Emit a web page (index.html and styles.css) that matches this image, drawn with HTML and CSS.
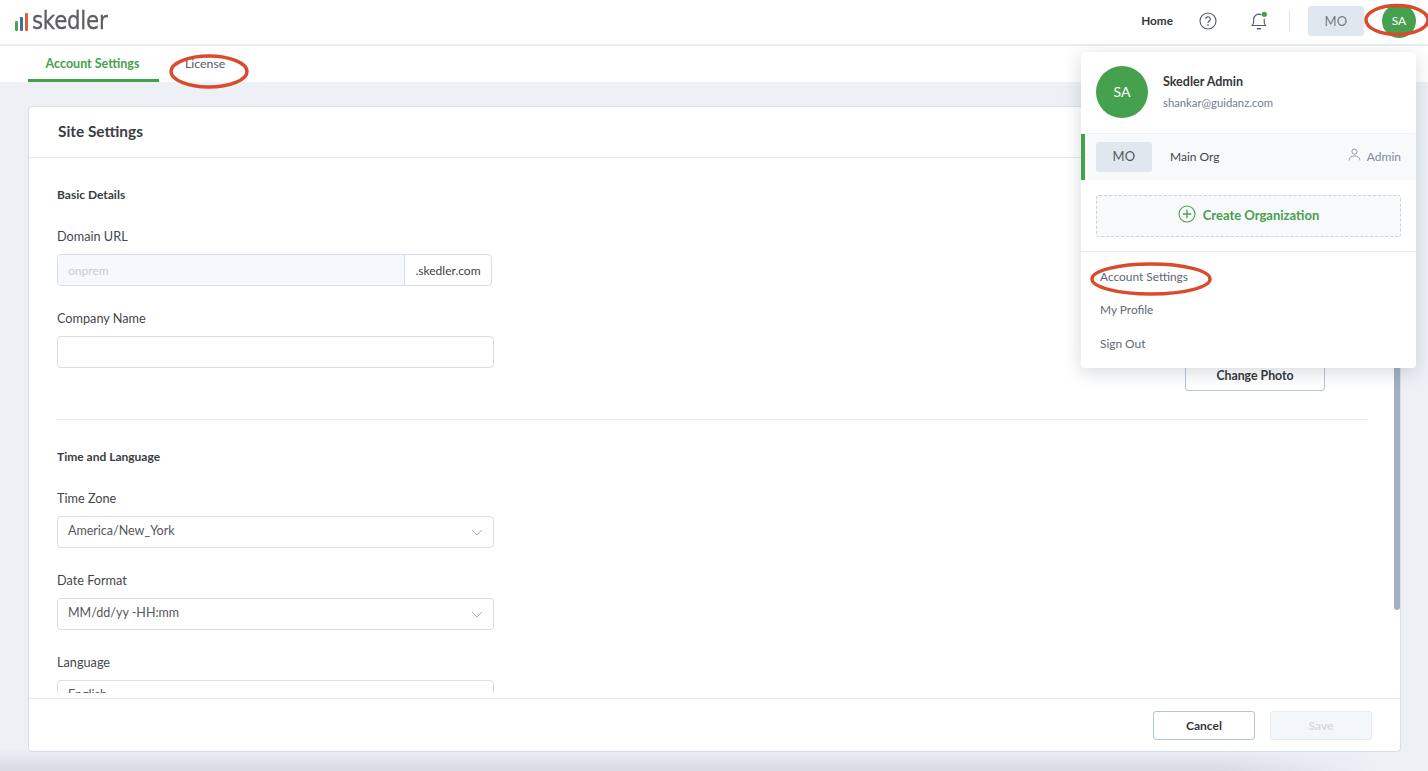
FILE: index.html
```html
<!DOCTYPE html>
<html lang="en">
<head>
<meta charset="utf-8">
<title>Skedler – Account Settings</title>
<link rel="stylesheet" href="styles.css">
</head>
<body>
<div class="app">
  <header class="topbar">
    <div class="logo">
      <svg class="logo-bars" width="14" height="20" viewBox="0 0 14 20"><rect x="0" y="9" width="3" height="10" rx="1" fill="#4aa252"/><rect x="5" y="5" width="3" height="14" rx="1" fill="#3f6f9f"/><rect x="10" y="1" width="3" height="18" rx="1" fill="#d9603b"/></svg>
      <span class="logo-text">skedler</span>
    </div>
    <nav class="topnav">
      <span class="home">Home</span>
      <svg class="help" width="18" height="18" viewBox="0 0 18 18"><circle cx="9" cy="9" r="8" fill="none" stroke="#4a5a72" stroke-width="1.1"/><path d="M6.7 7.1a2.3 2.3 0 1 1 3.4 2c-.8.5-1.1.9-1.1 1.7" fill="none" stroke="#4a5a72" stroke-width="1.2"/><circle cx="9" cy="13.1" r=".8" fill="#4a5a72"/></svg>
      <svg class="bell" width="18" height="20" viewBox="0 0 18 20"><path d="M2 14.5c1.2-.8 1.6-2 1.6-3.6V8.5a5.3 5.3 0 0 1 7.5-4.8M14.2 8v2.9c0 1.6.4 2.8 1.6 3.6H2" fill="none" stroke="#4a5a72" stroke-width="1.1" stroke-linecap="round" stroke-linejoin="round"/><rect x="6.8" y="17" width="4.4" height="1.6" rx=".8" fill="#4a5a72"/><circle cx="14.3" cy="3.3" r="2.6" fill="#45a14d"/></svg>
      <span class="vsep"></span>
      <span class="org-chip">MO</span>
      <span class="avatar-sm">SA</span>
    </nav>
  </header>

  <div class="tabs">
    <span class="tab active">Account Settings</span>
    <span class="tab">License</span>
  </div>

  <main class="page">
    <section class="card">
      <h1 class="card-title">Site Settings</h1>
      <div class="card-body">
        <div class="row-top">
          <div class="form-col">
            <h2 class="section-h">Basic Details</h2>
            <label class="label">Domain URL</label>
            <div class="domain">
              <span class="domain-input">onprem</span>
              <span class="domain-suffix">.skedler.com</span>
            </div>
            <label class="label">Company Name</label>
            <div class="input"></div>
          </div>
          <div class="photo-col">
            <button class="btn-photo">Change Photo</button>
          </div>
        </div>
        <hr class="divider">
        <div class="form-col">
          <h2 class="section-h">Time and Language</h2>
          <label class="label">Time Zone</label>
          <div class="select"><span>America/New_York</span><svg class="chev" width="12" height="7" viewBox="0 0 12 7"><path d="M1 1l5 5 5-5" fill="none" stroke="#a3adbb" stroke-width="1"/></svg></div>
          <label class="label">Date Format</label>
          <div class="select"><span>MM/dd/yy -HH:mm</span><svg class="chev" width="12" height="7" viewBox="0 0 12 7"><path d="M1 1l5 5 5-5" fill="none" stroke="#a3adbb" stroke-width="1"/></svg></div>
          <label class="label">Language</label>
          <div class="select select-lang"><span>English</span></div>
        </div>
      </div>
      <div class="scrollbar"></div>
      <footer class="card-foot">
        <button class="btn btn-cancel">Cancel</button>
        <button class="btn btn-save">Save</button>
      </footer>
    </section>
  </main>

  <div class="menu">
    <div class="menu-user">
      <span class="avatar-lg">SA</span>
      <div class="menu-id">
        <div class="menu-name">Skedler Admin</div>
        <div class="menu-mail">shankar@guidanz.com</div>
      </div>
    </div>
    <div class="menu-org">
      <span class="org-chip org-chip-menu">MO</span>
      <span class="org-name">Main Org</span>
      <span class="org-role">
        <svg width="13" height="14" viewBox="0 0 13 14"><circle cx="6.5" cy="3.6" r="2.6" fill="none" stroke="#8d99ac" stroke-width="1"/><path d="M1 12.5c0-3 2.4-4.6 5.5-4.6s5.500 1.600 5.500 4.600" fill="none" stroke="#8d99ac" stroke-width="1"/></svg>
        Admin
      </span>
    </div>
    <div class="menu-create">
      <div class="create-box">
        <svg width="18" height="18" viewBox="0 0 18 18"><circle cx="9" cy="9" r="8" fill="none" stroke="#45a14d" stroke-width="1.1"/><path d="M9 4.800v8.400M4.800 9h8.400" stroke="#45a14d" stroke-width="1.300"/></svg>
        <span>Create Organization</span>
      </div>
    </div>
    <ul class="menu-links">
      <li>Account Settings</li>
      <li>My Profile</li>
      <li>Sign Out</li>
    </ul>
  </div>

  <div class="bottom-fade"></div>

  <svg class="marks" width="1428" height="771" viewBox="0 0 1428 771">
    <g fill="none" stroke="#dc4a2e" stroke-width="3.500">
      <ellipse cx="209" cy="71.500" rx="38" ry="15.500"/>
      <ellipse cx="1397" cy="20" rx="31" ry="14.500"/>
      <ellipse cx="1151" cy="279" rx="59" ry="15"/>
    </g>
  </svg>
</div>
</body>
</html>
```
FILE: styles.css
```css
* { box-sizing: border-box; }
html, body { margin: 0; padding: 0; height: 100%; overflow: hidden; }
body { font-family: "Lato", "Liberation Sans", sans-serif; color: #3c3f45; background: #edf1f6; }

.app { position: relative; width: 1428px; height: 771px; display: flex; flex-direction: column; overflow: hidden; }

/* top bar */
.topbar { height: 46px; flex: none; background: #fff; border-bottom: 2px solid #e8edf2; display: flex; align-items: center; justify-content: space-between; padding: 0 10px 3px 15px; }
.logo { display: flex; align-items: center; gap: 3px; }
.logo-bars { display: block; margin-top: 2px; }
.logo-text { font-family: "DejaVu Sans", sans-serif; font-size: 24px; font-weight: 400; color: #5c5e61; line-height: 24px; letter-spacing: -0.3px; transform: scaleX(0.89); transform-origin: left center; -webkit-text-stroke: .3px #5c5e61; }
.topnav { display: flex; align-items: center; }
.home { font-size: 11.800px; font-weight: 700; color: #33363b; margin-right: 26px; }
.help { margin-right: 33px; }
.bell { margin-right: 21px; }
.vsep { width: 1px; height: 22px; background: #e4e8ee; margin-right: 18px; }
.org-chip { display: flex; align-items: center; justify-content: center; width: 56px; height: 30px; border-radius: 3px; background: #e1e7ef; color: #747d8a; font-size: 13px; letter-spacing: .3px; }
.avatar-sm { width: 34px; height: 34px; margin-left: 18px; margin-right: 2px; border-radius: 50%; background: #45a14d; color: #fff; display: flex; align-items: center; justify-content: center; font-size: 12px; }

/* tabs */
.tabs { height: 36px; flex: none; background: #fff; display: flex; padding-left: 28px; }
.tab { height: 36px; display: flex; align-items: center; padding-bottom: 2px; font-size: 12.300px; color: #55585e; }
.tab.active { width: 131px; justify-content: center; padding-right: 2px; padding-top: 2px; padding-bottom: 0; color: #45a14d; font-size: 12.500px; font-weight: 700; border-bottom: 3px solid #45a14d; margin-right: 26px; }

/* page */
.page { flex: 1; padding: 24px 27px 19px 28px; display: flex; min-height: 0; }
.card { position: relative; flex: 1; display: flex; flex-direction: column; background: #fff; border: 1px solid #d6deea; border-radius: 4px; }
.card-title { height: 51px; flex: none; margin: 0; padding: 0 29px 3px; display: flex; align-items: center; font-size: 15.400px; font-weight: 700; color: #3a3d42; border-bottom: 1px solid #e3e8ef; }
.card-body { height: 535px; flex: none; overflow: hidden; padding: 0 33px 0 28px; }

.row-top { display: flex; justify-content: space-between; }
.form-col { width: 437px; }
.section-h { margin: 0; padding-top: 29px; height: 70px; font-size: 12px; line-height: 16px; font-weight: 700; color: #3a3d42; }
.label { display: block; height: 26px; font-size: 12.700px; line-height: 16px; color: #44474d; }
.domain { display: flex; width: 435px; height: 32px; margin-bottom: 24px; border: 1px solid #d6deea; border-radius: 4px; overflow: hidden; font-size: 12px; }
.domain-input { flex: 1; background: #f7f8fb; color: #c8ccd3; padding-left: 10px; display: flex; align-items: center; }
.domain-suffix { width: 87px; border-left: 1px solid #d6deea; display: flex; align-items: center; justify-content: center; color: #3c3f45; }
.input { height: 32px; border: 1px solid #d6deea; border-radius: 4px; }
.photo-col { display: flex; align-items: flex-end; padding-right: 42px; }
.btn-photo { width: 140px; height: 30px; padding: 0 0 2px; margin-bottom: -23px; background: #fff; border: 1px solid #b5c4d6; border-radius: 3px; font: 700 12.300px "Lato", "Liberation Sans", sans-serif; color: #33363b; }
.divider { margin: 51px 0 0; border: 0; border-top: 1px solid #e7ebf0; }
.select { height: 32px; margin-bottom: 24px; border: 1px solid #d6deea; border-radius: 4px; display: flex; align-items: center; justify-content: space-between; padding: 0 10px 3px; font-size: 12.500px; color: #55585e; }
.select-lang { border-color: #dcdfe4; margin-bottom: 0; }
.chev { margin-top: 3px; }

.scrollbar { position: absolute; right: 0; top: 258px; width: 6px; height: 245px; background: #a3afc2; border-radius: 3px; }

.card-foot { margin-top: 5px; flex: 1; border-top: 1px solid #e3e8f0; display: flex; justify-content: flex-end; align-items: flex-start; gap: 15px; padding: 12px 28px 0 0; }
.btn { width: 102px; height: 29px; padding: 0; border-radius: 3px; font: 700 12px "Lato", "Liberation Sans", sans-serif; }
.btn-cancel { background: #fff; border: 1px solid #b5c4d6; color: #33363b; }
.btn-save { background: #f4f7fa; border: 1px solid #e6ebf1; color: #d5d9df; }

/* dropdown */
.menu { position: absolute; left: 1081px; top: 52px; width: 335px; height: 316px; background: #fff; border-radius: 4px; box-shadow: 0 4px 18px rgba(70, 80, 100, .22); display: flex; flex-direction: column; }
.menu-user { height: 82px; flex: none; display: flex; align-items: center; padding-left: 15px; border-bottom: 1px solid #eef1f5; }
.avatar-lg { width: 52px; height: 52px; border-radius: 50%; background: #45a14d; color: #fff; display: flex; align-items: center; justify-content: center; font-size: 14px; margin-right: 15px; margin-top: -2px; }
.menu-name { font-size: 12.500px; font-weight: 700; color: #33363b; line-height: 16px; margin-bottom: 5px; }
.menu-mail { font-size: 11.300px; color: #727e90; line-height: 16px; }
.menu-org { height: 46px; flex: none; display: flex; align-items: center; background: #f8f9fb; border-left: 4px solid #45a14d; padding: 0 15px 0 11px; }
.org-chip-menu { color: #55585e; padding-bottom: 2px; }
.org-name { margin-left: 18px; padding-bottom: 1px; font-size: 12px; color: #44474d; flex: 1; }
.org-role { display: flex; align-items: center; gap: 6px; padding-bottom: 1px; font-size: 12px; color: #7f8b9e; }
.org-role svg { margin-top: -4px; }
.menu-create { height: 72px; flex: none; padding: 15px 15px 0; border-bottom: 1px solid #e8edf4; }
.create-box { height: 42px; background: #f8f9fb; border: 1px dashed #c9d2e2; border-radius: 3px; padding-bottom: 2px; display: flex; align-items: center; justify-content: center; gap: 7px; font-size: 13px; font-weight: 700; color: #45a14d; }
.create-box svg { margin-top: -3px; }
.menu-links { list-style: none; margin: 0; padding: 8px 0 0 19px; font-size: 11.900px; color: #5e6775; }
.menu-links li { height: 33.300px; display: flex; align-items: center; }

.bottom-fade { position: absolute; left: 0; right: 0; bottom: 0; height: 22px; background: linear-gradient(to bottom, rgba(190, 194, 204, 0), rgba(190, 194, 204, .5)); -webkit-mask-image: linear-gradient(to right, #000 85%, transparent 96%); mask-image: linear-gradient(to right, #000 85%, transparent 96%); pointer-events: none; }
.marks { position: absolute; left: 0; top: 0; pointer-events: none; }
```
